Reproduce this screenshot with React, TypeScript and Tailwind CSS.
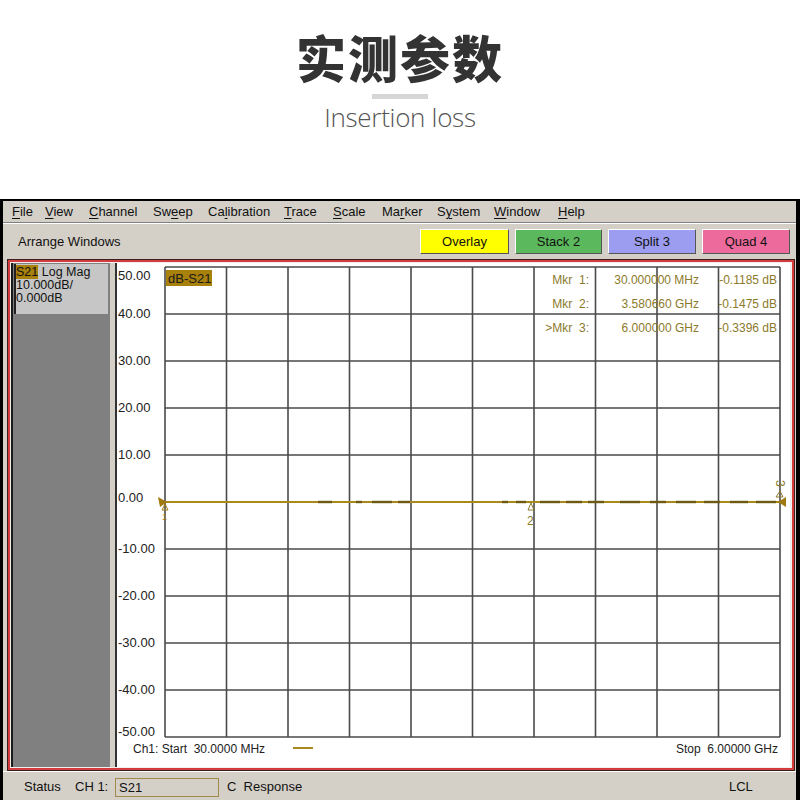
const menu: [string, number, number][] = [
  ["File", 0, 33],
  ["View", 0, 44],
  ["Channel", 0, 64],
  ["Sweep", 2, 55],
  ["Calibration", 2, 76],
  ["Trace", 0, 49],
  ["Scale", 0, 49],
  ["Marker", 2, 55],
  ["System", 1, 57],
  ["Window", 0, 64],
  ["Help", 0, 40],
];

const buttons = [
  { label: "Overlay", cls: "bg-[#ffff00] w-[89px]" },
  { label: "Stack 2", cls: "bg-[#5cb85c] w-[87px]" },
  { label: "Split 3", cls: "bg-[#9c9cf0] w-[88px]" },
  { label: "Quad 4", cls: "bg-[#ec6a9c] w-[88px]" },
];

const X0 = 165;
const X1 = 780;
const Y0 = 267;
const Y1 = 737;
const dx = (X1 - X0) / 10;
const dy = (Y1 - Y0) / 10;
const yLabels = ["50.00", "40.00", "30.00", "20.00", "10.00", "0.00", "-10.00", "-20.00", "-30.00", "-40.00", "-50.00"];
const gold = "#8c7a2c";
const sp = "\u00a0";
const markers = [
  [`Mkr${sp}${sp}1:`, "30.000000 MHz", "-0.1185 dB"],
  [`Mkr${sp}${sp}2:`, "3.580660 GHz", "-0.1475 dB"],
  [`>Mkr${sp}${sp}3:`, "6.000000 GHz", "-0.3396 dB"],
];

function Chart() {
  const traceY = 502;
  const dashes = [
    [318, 332], [356, 362], [372, 392], [398, 410], [502, 508], [516, 526], [540, 560], [566, 582], [588, 604],
    [620, 640], [650, 666], [676, 696], [704, 720], [730, 748], [756, 776],
  ];
  return (
    <svg
      className="block"
      width={673}
      height={502}
      viewBox="117 263 673 502"
      style={{ fontFamily: '"Liberation Sans", Arial, sans-serif' }}
    >
      <rect x={117} y={263} width={673} height={502} fill="#ffffff" />
      {Array.from({ length: 11 }).map((_, i) => (
        <line key={"v" + i} x1={X0 + i * dx} y1={Y0} x2={X0 + i * dx} y2={Y1} stroke="#4a4a4a" strokeWidth={1.6} />
      ))}
      {Array.from({ length: 11 }).map((_, i) => (
        <line key={"h" + i} x1={X0} y1={Y0 + i * dy} x2={X1} y2={Y0 + i * dy} stroke="#4a4a4a" strokeWidth={1.6} />
      ))}
      {yLabels.map((t, i) => {
        let y = Y0 + i * dy + 4;
        if (i === 0) y = Y0 + 13;
        if (i === 10) y = Y1 - 1;
        if (i === 5) y = Y0 + i * dy;
        return (
          <text key={t} x={118} y={y} fontSize={13} fill="#222">
            {t}
          </text>
        );
      })}
      <rect x={166} y={270} width={46} height={16} fill="#a8800c" />
      <text x={168} y={283} fontSize={13} fill="#1a1a1a">
        dB-S21
      </text>
      {markers.map((m, i) => (
        <g key={i} fontSize={12} fill={gold}>
          <text x={589} y={284 + i * 24} textAnchor="end">
            {m[0]}
          </text>
          <text x={699} y={284 + i * 24} textAnchor="end">
            {m[1]}
          </text>
          <text x={777} y={284 + i * 24} textAnchor="end">
            {m[2]}
          </text>
        </g>
      ))}
      <line x1={X0} y1={traceY} x2={X1} y2={traceY} stroke="#a88a1c" strokeWidth={1.8} />
      {dashes.map(([a, b], i) => (
        <line key={i} x1={a} y1={traceY} x2={b} y2={traceY} stroke="#6e5a10" strokeWidth={2.4} />
      ))}
      <polygon points="158,497 167,502 160,507" fill="#a07a10" />
      <polygon points="162,510 165,504 168,510" fill="none" stroke="#a07a10" strokeWidth={1} />
      <text x={162} y={520} fontSize={9} fill="#a07a10">
        1
      </text>
      <polygon points="528,510 531,503 534,510" fill="none" stroke="#8c7a2c" strokeWidth={1} />
      <text x={527} y={525} fontSize={12} fill={gold}>
        2
      </text>
      <polygon points="786,497 778,502 786,507" fill="#a07a10" />
      <polygon points="776,497 780,491 783,497" fill="none" stroke="#8c7a2c" strokeWidth={1} />
      <text x={776} y={488} fontSize={12} fill={gold} transform="rotate(90 780 484)">
        3
      </text>
      <text x={133} y={753} fontSize={12} fill="#222">
        {`Ch1: Start${sp}${sp}30.0000 MHz`}
      </text>
      <line x1={293} y1={748} x2={313} y2={748} stroke="#a88a1c" strokeWidth={2} />
      <text x={778} y={753} fontSize={12} fill="#222" textAnchor="end">
        {`Stop${sp}${sp}6.00000 GHz`}
      </text>
    </svg>
  );
}

export default function App() {
  return (
    <div className="w-[800px] h-[800px] overflow-hidden bg-white font-['Liberation_Sans',Arial,sans-serif]">
      <div className="h-[199px] flex flex-col items-center">
        <h1 className="mt-[26px] text-[50px] leading-[60px] font-black text-[#333] tracking-[2px] font-['Noto_Sans_CJK_SC',sans-serif]">
          实测参数
        </h1>
        <div className="mt-[8px] h-[5px] w-[56px] bg-[#d6d6d6]" />
        <p className="mt-[2px] text-[26px] leading-[32px] font-light text-[#555] tracking-[-0.3px] font-['Open_Sans',sans-serif]">
          Insertion loss
        </p>
      </div>

      <div className="h-[601px] border-t-2 border-l-[3px] border-r-[4px] border-black bg-[#d4d0c8] text-[13px] text-[#111] flex flex-col">
        <div className="h-[21px] flex items-center pl-[9px]">
          {menu.map(([label, u, w]) => (
            <span key={label} className="shrink-0" style={{ width: w }}>
              {label.slice(0, u)}
              <span className="underline underline-offset-2">{label[u]}</span>
              {label.slice(u + 1)}
            </span>
          ))}
        </div>
        <div className="h-[2px] border-t border-[#808080] border-b border-b-white" />
        <div className="h-[35px] flex items-center">
          <span className="pl-[15px] w-[417px]">Arrange Windows</span>
          <div className="flex gap-[6px]">
            {buttons.map((b) => (
              <div
                key={b.label}
                className={`${b.cls} h-[25px] flex items-center justify-center border border-t-white border-l-white border-r-[#555] border-b-[#555] text-[13px]`}
              >
                {b.label}
              </div>
            ))}
          </div>
        </div>

        <div className="h-[512px] pl-[5px] pr-[2px] pt-[1px]">
          <div className="h-[510px] border-2 border-[#d43c3c] shadow-[0_0_0_1px_#3a2020] flex p-[1px] bg-[#f0f0f0]">
            <div className="w-[99px] shrink-0 bg-[#808080] border-l-2 border-[#1a1a1a] pl-[1px] pt-[1px]">
              <div className="h-[50px] w-[94px] bg-[#c6c6c6] border-l-2 border-[#222] text-[12.5px] leading-[13px] text-[#111] pt-[2px]">
                <div>
                  <span className="bg-[#a8800c]">S21</span> Log Mag
                </div>
                <div>10.000dB/</div>
                <div>0.000dB</div>
              </div>
            </div>
            <div className="w-[7px] shrink-0 bg-[#d4d0c8] border-r-2 border-[#333]" />
            <div className="bg-white shrink-0">
              <Chart />
            </div>
          </div>
        </div>

        <div className="flex-1 flex items-center text-[13px] text-[#111] border-t border-white pt-[2px]">
          <span className="pl-[21px] w-[72px]">Status</span>
          <span className="w-[40px]">CH 1:</span>
          <div className="w-[104px] h-[19px] border border-[#a08a4a] pl-[3px] leading-[17px]">S21</div>
          <span className="pl-[8px] w-[510px] whitespace-pre">C  Response</span>
          <span>LCL</span>
        </div>
      </div>
    </div>
  );
}
